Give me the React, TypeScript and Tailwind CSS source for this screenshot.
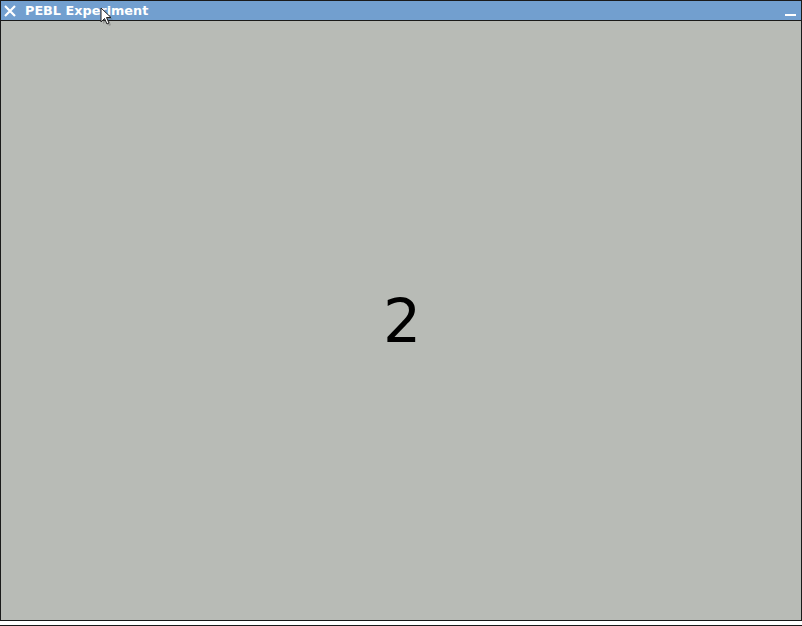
export default function App() {
  return (
    <div className="relative w-[802px] h-[626px] bg-white flex flex-col font-['DejaVu_Sans',sans-serif] overflow-hidden">
      <div className="h-[21px] bg-[#729fcf] border border-[#1a1a1a] flex items-center pl-[2px] pr-[5px] shrink-0">
        <svg width="14" height="14" viewBox="0 0 14 14" className="shrink-0">
          <path d="M2 2 L12 12 M12 2 L2 12" stroke="white" strokeWidth="2.2" />
        </svg>
        <span className="ml-[8px] mt-[2px] text-white text-[12.8px] font-bold leading-none">
          PEBL Experiment
        </span>
        <div className="flex-1" />
        <div className="w-[11px] h-[2px] bg-white mt-[8px]" />
      </div>
      <div className="h-[600px] bg-[#b8bbb6] border-x border-b border-[#1a1a1a] flex items-center justify-center shrink-0">
        <span className="text-black text-[60px] leading-none ml-[2px]">2</span>
      </div>
      <div className="h-[4px] bg-white shrink-0" />
      <div className="flex-1 bg-[#1a1a1a]" />
      <svg className="absolute left-[100px] top-[7px]" width="16" height="22" viewBox="0 0 16 22">
        <path d="M3 3 L3 17 L6.5 13.5 L9 19 L11 18 L8.5 12.5 L13 12.5 Z" fill="#555" opacity="0.35" />
        <path d="M1 1 L1 15 L4.5 11.5 L7 17 L9 16 L6.5 10.5 L11 10.5 Z" fill="white" stroke="#222" strokeWidth="1" />
      </svg>
    </div>
  )
}
